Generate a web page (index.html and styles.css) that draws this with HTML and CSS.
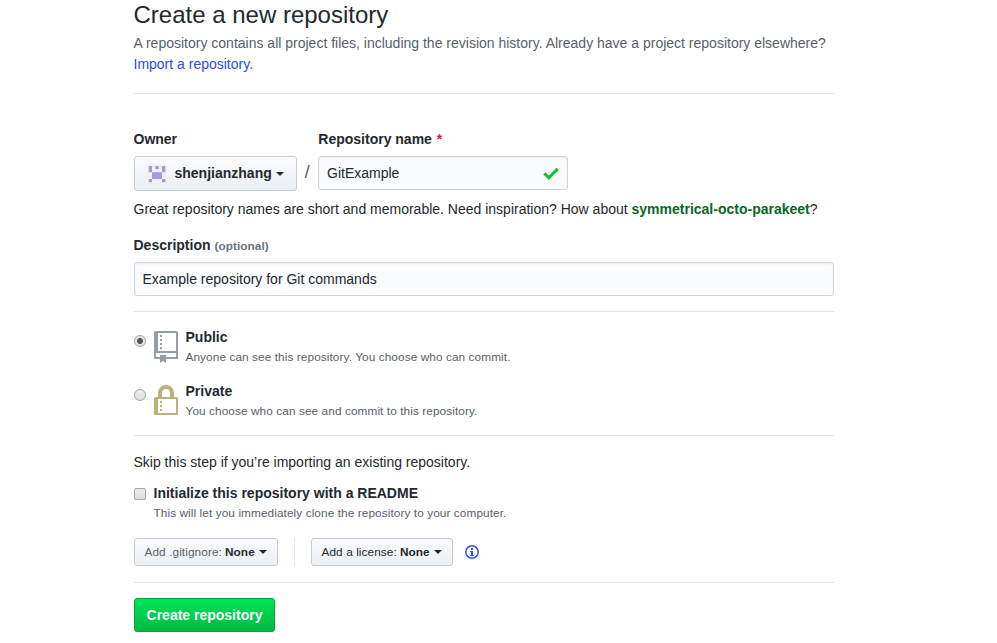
FILE: index.html
```html
<!DOCTYPE html>
<html lang="en">
<head>
<meta charset="utf-8">
<title>Create a new repository</title>
<link rel="stylesheet" href="styles.css">
</head>
<body>
<main class="page">
  <header class="head">
    <h1>Create a new repository</h1>
    <p>A repository contains all project files, including the revision history. Already have a project repository elsewhere? <a href="#">Import a repository.</a></p>
  </header>
  <form>
    <div class="names">
      <div class="owner">
        <span class="label">Owner</span>
        <button type="button" class="btn owner-btn">
          <svg class="avatar" viewBox="0 0 20 20"><path fill="#f0f0f0" d="M0 0h20v20H0z"/><path fill="#a599df" d="M1.700 2H5v6.300H1.700zM8.300 2h3.400v3H8.300zM15 2h3.300v6.300H15zM5 8.300h10V15H5zM1.700 15H5v3.300H1.700zM15 15h3.300v3.300H15z"/></svg>
          <b>shenjianzhang</b><i class="caret"></i>
        </button>
      </div>
      <span class="slash">/</span>
      <div class="repo">
        <span class="label">Repository name <em>*</em></span>
        <div class="field"><span>GitExample</span><svg width="16" height="13" viewBox="0 0 16 13"><path fill="none" stroke="#08c236" stroke-width="3" d="M1.3 6.4 5.9 10.7 14.7 1.9"/></svg></div>
      </div>
    </div>
    <p class="hint">Great repository names are short and memorable. Need inspiration? How about <strong>symmetrical-octo-parakeet</strong>?</p>
    <div class="desc-label label">Description <small>(optional)</small></div>
    <div class="field">Example repository for Git commands</div>
    <div class="visibility">
      <label class="option">
        <i class="radio on"></i>
        <svg class="kind" width="24" height="33" viewBox="0 0 24 33"><path fill="#959da5" fill-rule="evenodd" d="M1.500 0h21Q24 0 24 1.500v25Q24 28 22.500 28H12v4l-3-2-3 2v-4H1.500Q0 28 0 26.500v-25Q0 0 1.500 0zM4 2v18h18V2zM2 22v4h4v-2h6v2h10v-4z"/><path fill="#959da5" d="M6 4h2v2H6zM6 8h2v2H6zM6 12h2v2H6zM6 16h2v2H6z"/></svg>
        <span class="text"><b>Public</b><small>Anyone can see this repository. You choose who can commit.</small></span>
      </label>
      <label class="option">
        <i class="radio"></i>
        <svg class="kind" width="24" height="33" viewBox="0 0 24 33"><path fill="none" stroke="#bcb07c" stroke-width="4" d="M6 13V8a6 6 0 0 1 12 0v5"/><path fill="#bcb07c" fill-rule="evenodd" d="M1.500 12h21Q24 12 24 13.500v15Q24 30 22.500 30h-21Q0 30 0 28.500v-15Q0 12 1.500 12zM4 14v14h18V14z"/><path fill="#bcb07c" d="M6 16h2v2H6zM6 20h2v2H6zM6 24h2v2H6z"/></svg>
        <span class="text"><b>Private</b><small>You choose who can see and commit to this repository.</small></span>
      </label>
    </div>
    <div class="init">
      <p>Skip this step if you’re importing an existing repository.</p>
      <label class="readme">
        <i class="checkbox"></i>
        <span class="text"><b>Initialize this repository with a README</b><small>This will let you immediately clone the repository to your computer.</small></span>
      </label>
      <div class="pickers">
        <button type="button" class="btn small ignore"><span>Add .gitignore:</span> <b>None</b><i class="caret"></i></button>
        <i class="divider"></i>
        <button type="button" class="btn small license"><span>Add a license:</span> <b>None</b><i class="caret"></i></button>
        <svg class="info" width="14" height="14" viewBox="0 0 14 14"><circle cx="7" cy="7" r="6.200" fill="none" stroke="#2b54dc" stroke-width="1.500"/><path fill="#2b54dc" d="M6 3h2v2H6zM5 6h3v4h1v1H5v-1h1V7H5z"/></svg>
      </div>
    </div>
    <button type="button" class="btn primary">Create repository</button>
  </form>
</main>
</body>
</html>
```
FILE: styles.css
```css
* { box-sizing: border-box; }
body {
  margin: 0;
  height: 643px;
  overflow: hidden;
  background: #fff;
  color: #24292e;
  font: 14px/21px "Liberation Sans", Arial, sans-serif;
}
h1, p { margin: 0; }
i, em { font-style: normal; }
.page { width: 700px; margin-left: 133.5px; }
.head { height: 94px; border-bottom: 1px solid #e1e4e8; }
.head h1 { height: 33px; font-size: 24px; font-weight: 400; line-height: 30px; }
.head p { color: #586069; }
.head a { color: #2b4fd8; text-decoration: none; }
.names { display: flex; padding-top: 35px; }
.label { display: block; height: 21px; font-weight: 700; }
.label em { color: #e5173f; margin-left: 1px; }
.label small { color: #6a737d; font-size: 11.8px; letter-spacing: .06px; }
.names .label { margin-bottom: 6px; }
.btn {
  display: flex;
  align-items: center;
  margin: 0;
  border: 1px solid #c8ccd0;
  border-radius: 3px;
  background: linear-gradient(#fafbfc, #ebf0f4);
  color: #24292e;
  font: inherit;
  white-space: nowrap;
}
.owner-btn { width: 163px; height: 35px; padding: 0 11px 0 12.5px; }
.avatar { width: 20px; height: 20px; margin-right: 7.5px; }
.caret {
  margin-left: 4px;
  border: 4px solid transparent;
  border-top-color: #24292e;
  border-bottom: 0;
}
.slash { width: 21.5px; padding: 32px 0 0 8px; color: #586069; font-size: 19px; }
.repo { width: 250px; }
.repo .label { padding-left: .3px; }
.field {
  display: flex;
  align-items: center;
  justify-content: space-between;
  height: 34px;
  padding: 0 8px;
  border: 1px solid #d1d5da;
  border-radius: 3px;
  background: #fafbfc;
  box-shadow: inset 0 1px 2px rgba(27, 31, 35, .07);
}
.hint { margin-top: 8px; }
.hint strong { color: #08691f; }
.desc-label { margin: 15px 0 6px; }
.visibility {
  height: 125px;
  margin-top: 15px;
  padding-top: 15px;
  border: solid #e1e4e8;
  border-width: 1px 0;
}
.option { display: flex; height: 54px; }
.radio {
  width: 12px;
  height: 12px;
  margin: 8px 8.5px 0 0;
  border: 1px solid #a4a4a4;
  border-radius: 50%;
  background: linear-gradient(#ededed, #dedede);
}
.radio.on { background: radial-gradient(circle, #555 0 2.600px, #e6e6e6 3.400px); }
.kind { margin: 4px 7.5px 0 0; }
.text { display: flex; flex-direction: column; }
.text small { color: #586069; font-size: 11.8px; letter-spacing: .09px; line-height: 18px; }
.init { height: 147px; padding-top: 16px; border-bottom: 1px solid #e1e4e8; }
.readme { display: flex; margin-top: 10px; }
.checkbox {
  width: 12px;
  height: 12px;
  margin: 5px 8px 0 0;
  border: 1px solid #a4a4a4;
  border-radius: 2px;
  background: linear-gradient(#ededed, #dedede);
}
.pickers { display: flex; align-items: center; margin-top: 16px; }
.small { height: 28px; padding: 1px 10px 0; font-size: 11.8px; letter-spacing: .09px; gap: 3px; }
.small .caret { margin: -1px 0 0 1px; }
.ignore { width: 144px; }
.ignore span { color: #586069; }
.license { width: 142px; }
.divider { width: 1px; height: 28px; margin: 0 16px; background: #e1e4e8; }
.info { margin-left: 12.5px; }
.primary {
  height: 34px;
  width: 141px;
  margin-top: 15px;
  padding: 0 0 0 1px;
  justify-content: center;
  border-color: #08a535;
  background: linear-gradient(#00e45b, #00b940);
  color: #fff;
  font-weight: 700;
}
```
